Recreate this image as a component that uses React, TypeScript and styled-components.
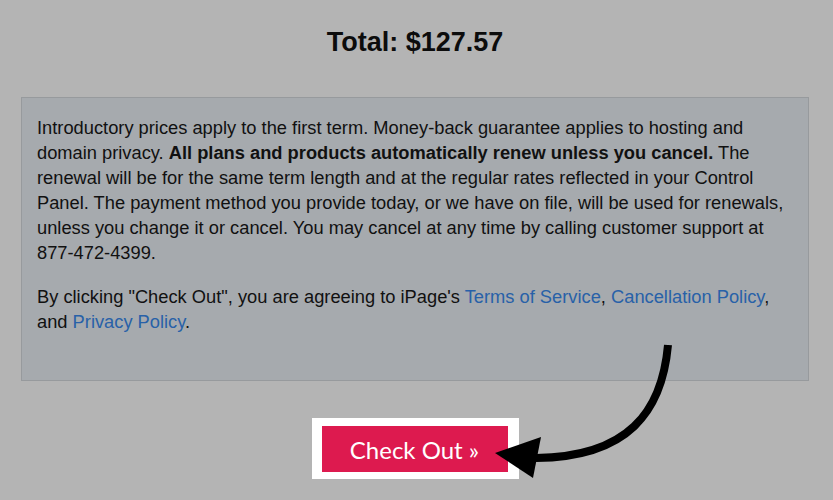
import styled, { createGlobalStyle } from "styled-components";

const GlobalStyle = createGlobalStyle`
  html, body {
    margin: 0;
    padding: 0;
    background: #b4b4b4;
  }
`;

const Page = styled.div`
  position: relative;
  height: 500px;
  padding: 22px 24px 0 21px;
  box-sizing: border-box;
  font-family: "Liberation Sans", Arial, sans-serif;
  color: #111;
  overflow: hidden;
`;

const Total = styled.h1`
  margin: 0;
  text-align: center;
  font-size: 27px;
  line-height: 40px;
  font-weight: bold;
  color: #0c0c0c;
`;

const Notice = styled.div`
  margin-top: 35px;
  background: #a6aaae;
  border: 1px solid #979a9d;
  padding: 17px 15px 27px 15px;
  font-size: 18.3px;
  line-height: 25px;
`;

const Para = styled.p`
  margin: 0 0 19px 0;
`;

const Link = styled.a`
  color: #2861a8;
  text-decoration: none;
`;

const ButtonRow = styled.div`
  display: flex;
  justify-content: center;
  margin-top: 37px;
`;

const ButtonFrame = styled.div`
  background: #ffffff;
  padding: 8px 11px 7px 10px;
`;

const CheckOutButton = styled.button`
  width: 186px;
  height: 46px;
  border: none;
  background: #dd1a4f;
  color: #fff;
  font-family: "Lato", "Open Sans", sans-serif;
  font-size: 24px;
  font-weight: 400;
  padding: 0;
  cursor: pointer;
`;

const ArrowLayer = styled.svg`
  position: absolute;
  left: 0;
  top: 0;
  pointer-events: none;
`;

export default function App() {
  return (
    <>
      <GlobalStyle />
      <Page>
        <Total>Total: $127.57</Total>
        <Notice>
          <Para>
            Introductory prices apply to the first term. Money-back guarantee applies to hosting and
            domain privacy. <b>All plans and products automatically renew unless you cancel.</b> The
            renewal will be for the same term length and at the regular rates reflected in your Control
            Panel. The payment method you provide today, or we have on file, will be used for renewals,
            unless you change it or cancel. You may cancel at any time by calling customer support at
            877-472-4399.
          </Para>
          <Para>
            By clicking "Check Out", you are agreeing to iPage's <Link href="#">Terms of Service</Link>,{" "}
            <Link href="#">Cancellation Policy</Link>, and <Link href="#">Privacy Policy</Link>.
          </Para>
        </Notice>
        <ButtonRow>
          <ButtonFrame>
            <CheckOutButton>Check Out »</CheckOutButton>
          </ButtonFrame>
        </ButtonRow>
        <ArrowLayer width="833" height="500" viewBox="0 0 833 500">
          <path
            d="M668 345 C662 412 628 457 536 458"
            fill="none"
            stroke="#000"
            strokeWidth="8"
          />
          <polygon points="495,453 541,437 533,478" fill="#000" />
        </ArrowLayer>
      </Page>
    </>
  );
}
